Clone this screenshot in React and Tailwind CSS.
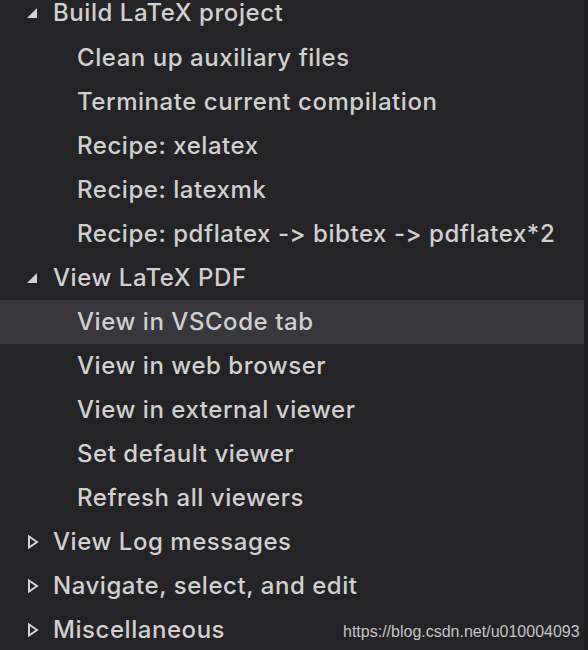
import React from 'react';

const groups = [
  {
    label: 'Build LaTeX project',
    open: true,
    items: [
      'Clean up auxiliary files',
      'Terminate current compilation',
      'Recipe: xelatex',
      'Recipe: latexmk',
      'Recipe: pdflatex -> bibtex -> pdflatex*2',
    ],
  },
  {
    label: 'View LaTeX PDF',
    open: true,
    items: [
      'View in VSCode tab',
      'View in web browser',
      'View in external viewer',
      'Set default viewer',
      'Refresh all viewers',
    ],
  },
  { label: 'View Log messages', open: false, items: [] },
  { label: 'Navigate, select, and edit', open: false, items: [] },
  { label: 'Miscellaneous', open: false, items: [] },
];

const Twisty = ({ open }) =>
  open ? (
    <svg width="12" height="12" viewBox="0 0 12 12" className="shrink-0">
      <path d="M10 1 L10 11 L0 11 Z" fill="#d4d4d4" />
    </svg>
  ) : (
    <svg width="12" height="14" viewBox="0 0 12 14" className="shrink-0">
      <path d="M2 1.5 L10 7 L2 12.5 Z" fill="none" stroke="#d4d4d4" strokeWidth="2" />
    </svg>
  );

const Row = ({ children, selected, indent, first }) => (
  <div
    className={`flex items-center ${first ? 'h-[36px] pb-[10px]' : 'h-[44px]'} ${
      selected ? 'bg-[#37373c]' : ''
    } ${indent ? 'pl-[77px]' : 'pl-[25px]'}`}
  >
    {children}
  </div>
);

const App = () => {
  return (
    <div
      className="relative w-[588px] h-[650px] overflow-hidden bg-[#1f1f21] text-[#d0d0d0]"
      style={{ fontFamily: 'Inter, "Liberation Sans", sans-serif' }}
    >
      <div className="h-full bg-[#242426] mr-[4px]">
        <div className="text-[24px] leading-[24px] font-medium tracking-[0.55px]">
          {groups.map((g, gi) => (
            <div key={g.label}>
              <Row first={gi === 0}>
                <span className="w-[16px] flex justify-center">
                  <Twisty open={g.open} />
                </span>
                <span className="ml-[12px]">{g.label}</span>
              </Row>
              {g.items.map((it) => (
                <Row key={it} indent selected={it === 'View in VSCode tab'}>
                  {it}
                </Row>
              ))}
            </div>
          ))}
        </div>
      </div>
      <div
        className="absolute left-[343px] top-[620px] text-[16px] text-[#c4c4c4]"
        style={{ fontFamily: '"Liberation Sans", Arial, sans-serif' }}
      >
        https://blog.csdn.net/u010004093
      </div>
    </div>
  );
};

export default App;
